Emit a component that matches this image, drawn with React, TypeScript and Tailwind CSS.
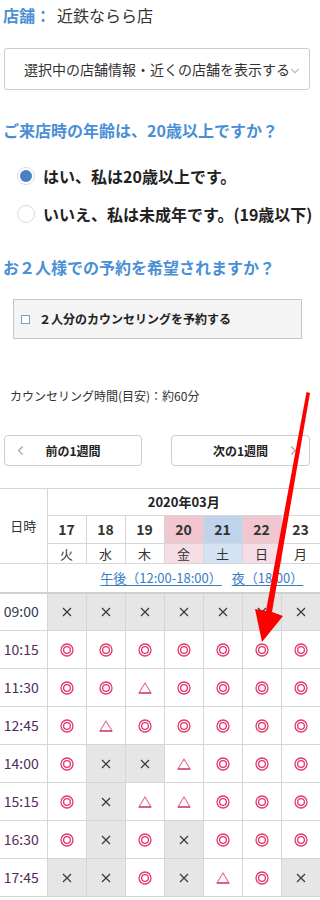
import { ChevronDown, ChevronLeft, ChevronRight } from "lucide-react";

const DAYS = [
  { d: "17", w: "火", tone: "" },
  { d: "18", w: "水", tone: "" },
  { d: "19", w: "木", tone: "" },
  { d: "20", w: "金", tone: "pink" },
  { d: "21", w: "土", tone: "blue" },
  { d: "22", w: "日", tone: "pink" },
  { d: "23", w: "月", tone: "" },
];

const SLOTS = [
  { t: "09:00", s: "xxxxxxx" },
  { t: "10:15", s: "ooooooo" },
  { t: "11:30", s: "oo^oooo" },
  { t: "12:45", s: "o^ooooo" },
  { t: "14:00", s: "oxx^ooo" },
  { t: "15:15", s: "ox^^ooo" },
  { t: "16:30", s: "oxoxooo" },
  { t: "17:45", s: "xxox^ox" },
];

function DoubleCircle() {
  return (
    <svg width="14" height="14" viewBox="0 0 14 14" className="mx-auto block">
      <circle cx="7" cy="7" r="6" fill="none" stroke="#e2386a" strokeWidth="1.3" />
      <circle cx="7" cy="7" r="3.4" fill="none" stroke="#e2386a" strokeWidth="1.3" />
    </svg>
  );
}

function Triangle() {
  return (
    <svg width="14" height="12" viewBox="0 0 14 12" className="mx-auto block">
      <polygon points="7,1 13,11 1,11" fill="none" stroke="#e5708f" strokeWidth="1.1" />
      <line x1="1" y1="11" x2="13" y2="11" stroke="#c93262" strokeWidth="1.3" />
    </svg>
  );
}

function Cross() {
  return (
    <svg width="10" height="10" viewBox="0 0 10 10" className="mx-auto block">
      <path d="M1 1 L9 9 M9 1 L1 9" stroke="#3c3c3c" strokeWidth="1.3" />
    </svg>
  );
}

function Slot({ v }: { v: string }) {
  if (v === "o") return <DoubleCircle />;
  if (v === "^") return <Triangle />;
  return <Cross />;
}

function Radio({ checked, label }: { checked?: boolean; label: string }) {
  return (
    <div className="flex h-6 items-center gap-2 pl-[17px]">
      <span className="flex h-[18px] w-[18px] shrink-0 items-center justify-center rounded-full border border-[#dcdcdc] bg-white">
        {checked && <span className="h-[12px] w-[12px] rounded-full bg-[#4a7fc0]" />}
      </span>
      <span className="whitespace-nowrap text-[16px] font-bold text-[#222]">{label}</span>
    </div>
  );
}

export default function App() {
  return (
    <div className="relative w-[320px] overflow-hidden bg-white font-['Noto_Sans_CJK_JP',sans-serif] text-[#333]">
      <div className="flex h-[30px] items-center pl-[3px] text-[16px]">
        <span className="font-bold text-[#4a8fd6]">店舗：</span>
        <span className="ml-[6px] text-[#333]">近鉄ならら店</span>
      </div>

      <div className="relative mx-[4px] mt-[18px] flex h-[42px] w-[306px] items-center justify-center rounded-[3px] border border-[#cccccc] text-[14px] text-[#333]">
        選択中の店舗情報・近くの店舗を表示する
        <ChevronDown size={14} strokeWidth={2} className="absolute right-[7px] top-[15px] text-[#bbbbbb]" />
      </div>

      <h2 className="mt-[28px] h-6 pl-[3px] text-[16px] font-bold leading-6 text-[#4a8fd6]">
        ご来店時の年齢は、20歳以上ですか？
      </h2>

      <div className="mt-[22px]">
        <Radio checked label="はい、私は20歳以上です。" />
      </div>
      <div className="mt-[14px]">
        <Radio label="いいえ、私は未成年です。(19歳以下)" />
      </div>

      <h2 className="mt-[29px] h-6 pl-[3px] text-[16px] font-bold leading-6 text-[#4a8fd6]">
        お２人様での予約を希望されますか？
      </h2>

      <div className="ml-[13px] mt-[20px] flex h-[40px] w-[289px] items-center gap-[9px] border border-[#c8c8c8] bg-[#f4f4f4] pl-[7px]">
        <span className="h-[9px] w-[9px] border border-[#7f9fc8] bg-white" />
        <span className="text-[12px] font-bold text-[#222]">２人分のカウンセリングを予約する</span>
      </div>

      <p className="ml-[10px] mt-[48px] h-[18px] text-[12px] leading-[18px] text-[#333]">
        カウンセリング時間(目安)：約60分
      </p>

      <div className="mt-[30px] flex justify-between px-[4px] pr-[10px]">
        <button className="relative flex h-[31px] w-[138px] items-center justify-center rounded-[4px] border border-[#cccccc] bg-white text-[12px] font-bold text-[#222]">
          <ChevronLeft size={15} strokeWidth={2} className="absolute left-[8px] text-[#aaaaaa]" />
          前の1週間
        </button>
        <button className="relative flex h-[31px] w-[139px] items-center justify-center rounded-[4px] border border-[#cccccc] bg-white text-[12px] font-bold text-[#222]">
          次の1週間
          <ChevronRight size={15} strokeWidth={2} className="absolute right-[8px] text-[#aaaaaa]" />
        </button>
      </div>

      <table className="mt-[22px] w-[320px] table-fixed border-collapse text-center">
        <colgroup>
          <col className="w-[47px]" />
          {DAYS.map((d) => (
            <col key={d.d} className="w-[39px]" />
          ))}
        </colgroup>
        <thead>
          <tr className="h-[27px] border-t border-[#d6d6d6]">
            <th rowSpan={3} className="border-r border-b border-[#d6d6d6] text-[13px] font-normal text-[#333]">
              日時
            </th>
            <th colSpan={7} className="border-b border-[#d6d6d6] text-[13px] font-bold text-[#222]">
              2020年03月
            </th>
          </tr>
          <tr className="h-[28px]">
            {DAYS.map((d) => (
              <th
                key={d.d}
                className={`border border-[#d6d6d6] text-[14px] font-semibold text-[#333] ${
                  d.tone === "pink" ? "bg-[#f2c6d0]" : d.tone === "blue" ? "bg-[#bfd4ea]" : "bg-white"
                }`}
              >
                {d.d}
              </th>
            ))}
          </tr>
          <tr className="h-[20px]">
            {DAYS.map((d) => (
              <th
                key={d.d}
                className={`border border-[#d6d6d6] text-[13px] font-normal leading-[18px] text-[#333] ${
                  d.tone === "pink" ? "bg-[#f7dde6]" : d.tone === "blue" ? "bg-[#d4e3f3]" : "bg-white"
                }`}
              >
                {d.w}
              </th>
            ))}
          </tr>
          <tr className="h-[29px] border-b-2 border-[#d0d0d0]">
            <th className="border-r border-[#d6d6d6]" />
            <th colSpan={7} className="whitespace-nowrap pl-[36px] text-[13px] font-normal text-[#3a7cc4]">
              <span className="underline underline-offset-2">午後（12:00-18:00）</span>
              <span className="ml-[10px] underline underline-offset-2">夜（18:00）</span>
            </th>
          </tr>
        </thead>
        <tbody>
          {SLOTS.map((row) => (
            <tr key={row.t} className="h-[38px]">
              <td className={`border-r border-b border-[#d6d6d6] pr-[4px] text-[14px] ${row.t === "09:00" ? "text-[#2f3b4c]" : "text-[#552a5e]"}`}>
                {row.t}
              </td>
              {row.s.split("").map((v, i) => (
                <td
                  key={i}
                  className={`border border-[#d6d6d6] ${v === "x" ? "bg-[#e6e6e6]" : "bg-white"}`}
                >
                  <Slot v={v} />
                </td>
              ))}
            </tr>
          ))}
        </tbody>
      </table>
      <div className="h-[4px]" />

      <svg
        className="pointer-events-none absolute left-0 top-0"
        width="320"
        height="900"
        viewBox="0 0 320 900"
      >
        <polygon
          points="306.5,392 310,393 272,612 283,616 262,642 255,609 266,611"
          fill="#ff0000"
        />
      </svg>
    </div>
  );
}
